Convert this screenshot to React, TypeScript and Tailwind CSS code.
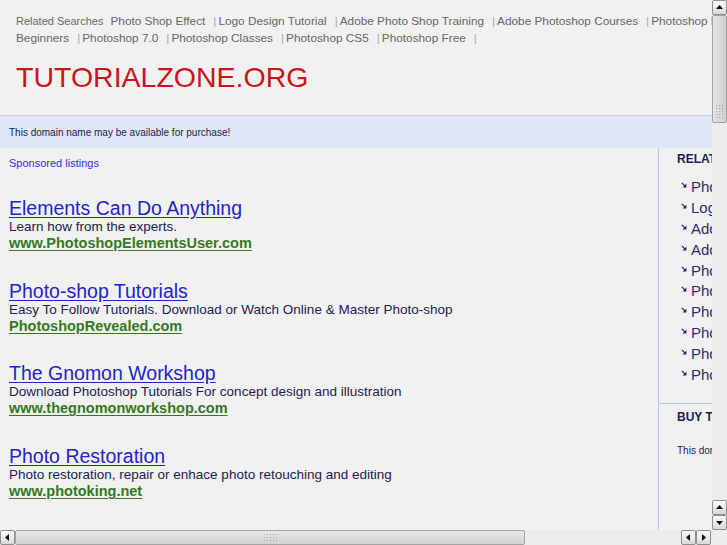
import React from 'react';

const topLinks = [
  'Photo Shop Effect',
  'Logo Design Tutorial',
  'Adobe Photo Shop Training',
  'Adobe Photoshop Courses',
  'Photoshop For',
];

const topLinks2 = ['Beginners', 'Photoshop 7.0', 'Photoshop Classes', 'Photoshop CS5', 'Photoshop Free'];

const sideLinks = [
  'Photo Shop Effect',
  'Logo Design Tutorial',
  'Adobe Photo Shop Training',
  'Adobe Photoshop Courses',
  'Photoshop For Beginners',
  'Photoshop 7.0',
  'Photoshop Classes',
  'Photoshop CS5',
  'Photoshop Free',
  'Photoshop Tutorials',
];

const ads = [
  {
    title: 'Elements Can Do Anything',
    desc: 'Learn how from the experts.',
    url: 'www.PhotoshopElementsUser.com',
  },
  {
    title: 'Photo-shop Tutorials',
    desc: 'Easy To Follow Tutorials. Download or Watch Online & Master Photo-shop',
    url: 'PhotoshopRevealed.com',
  },
  {
    title: 'The Gnomon Workshop',
    desc: 'Download Photoshop Tutorials For concept design and illustration',
    url: 'www.thegnomonworkshop.com',
  },
  {
    title: 'Photo Restoration',
    desc: 'Photo restoration, repair or enhace photo retouching and editing',
    url: 'www.photoking.net',
  },
];

function Arrow({ dir }: { dir: 'up' | 'down' | 'left' | 'right' }) {
  const pts = {
    up: '1,6 4.5,2 8,6',
    down: '1,3 4.5,7 8,3',
    left: '6,1 2,4.5 6,8',
    right: '3,1 7,4.5 3,8',
  }[dir];
  return (
    <svg width="9" height="9" viewBox="0 0 9 9">
      <polygon points={pts} fill="#111" />
    </svg>
  );
}

function SBtn({ dir }: { dir: 'up' | 'down' | 'left' | 'right' }) {
  return (
    <div className="w-[15px] h-[15px] shrink-0 flex items-center justify-center border border-[#8f8f8f] rounded-[2px] bg-gradient-to-b from-[#fbfbfb] to-[#d9d9d9]">
      <Arrow dir={dir} />
    </div>
  );
}

function Grip({ vertical }: { vertical?: boolean }) {
  return (
    <div className={vertical ? 'grid grid-cols-3 gap-[2px]' : 'grid grid-cols-5 gap-[2px]'}>
      {Array.from({ length: 15 }).map((_, i) => (
        <div key={i} className="w-[1px] h-[1px] bg-[#a8a8a8]" />
      ))}
    </div>
  );
}

function SideArrow() {
  return (
    <svg width="6" height="6" viewBox="0 0 6 6" className="shrink-0 mt-[5px]">
      <path d="M0.8 0.8 L4.6 4.6" stroke="#22276a" strokeWidth="1.2" />
      <path d="M5.4 1.6 L5.4 5.4 L1.6 5.4 Z" fill="#22276a" />
    </svg>
  );
}

export default function App() {
  return (
    <div
      className="w-[727px] h-[545px] flex flex-col bg-[#f1f1f1] overflow-hidden"
      style={{ fontFamily: '"Liberation Sans", Arial, sans-serif' }}
    >
      <div className="flex flex-1 min-h-0">
        {/* page */}
        <div className="flex-1 min-w-0 overflow-hidden">
          <div className="w-[900px]">
            {/* header */}
            <div className="px-4 pt-[13px] pb-[22px]">
              <div className="whitespace-nowrap leading-[17px] text-[11.8px] text-[#666]">
                <span className="text-[11px] text-[#6a6a6a] mr-[7px]">Related Searches</span>
                {topLinks.map((l, i) => (
                  <span key={l}>
                    {i > 0 && <span className="text-[#aaa] ml-[8px] mr-[2px]">|</span>}
                    <span>{l}</span>
                  </span>
                ))}
              </div>
              <div className="whitespace-nowrap leading-[17px] text-[11.8px] text-[#666]">
                {topLinks2.map((l) => (
                  <span key={l}>
                    <span>{l}</span>
                    <span className="text-[#aaa] ml-[8px] mr-[2px]">|</span>
                  </span>
                ))}
              </div>
              <div className="mt-[14px] text-[28.5px] leading-[32px] text-[#c8161b]">TUTORIALZONE.ORG</div>
            </div>

            {/* banner */}
            <div className="border-t border-[#c3d1ea] bg-[#dfe7f6] h-[33px] flex items-center pl-[9px] text-[10px] text-[#1b1d4e]">
              This domain name may be available for purchase!
            </div>

            {/* body */}
            <div className="flex">
              <div className="w-[659px] shrink-0 border-r border-[#b6c8e8] h-[400px] pl-[9px]">
                <div className="pt-[8px] text-[11px] leading-[14px] text-[#3030e0]">Sponsored listings</div>
                <div className="mt-[28px] flex flex-col gap-[28.7px]">
                  {ads.map((a) => (
                    <div key={a.title} className="flex flex-col">
                      <span className="text-[19.5px] leading-[20px] text-[#2323cc] underline underline-offset-[2px]">
                        {a.title}
                      </span>
                      <span className="text-[13.5px] leading-[17px] text-[#222250]">{a.desc}</span>
                      <span className="text-[14.5px] leading-[17px] font-bold text-[#337a1e] underline underline-offset-[2px]">
                        {a.url}
                      </span>
                    </div>
                  ))}
                </div>
              </div>

              <div className="w-[220px] shrink-0">
                <div className="pl-[18px] pt-[4px] pb-[17px]">
                  <div className="text-[12px] leading-[14px] font-bold text-[#1c1f55]">RELATED SEARCHES</div>
                  <div className="mt-[11px] flex flex-col pl-[4px]">
                    {sideLinks.map((l) => (
                      <div key={l} className="flex gap-[4px] h-[20.9px] text-[15px] leading-[20.9px] text-[#2a2e6e]">
                        <SideArrow />
                        <span>{l}</span>
                      </div>
                    ))}
                  </div>
                </div>
                <div className="border-t border-[#b6c8e8] pl-[18px] pt-[6px]">
                  <div className="text-[12px] leading-[14px] font-bold text-[#1c1f55]">BUY THIS DOMAIN</div>
                  <div className="mt-[20px] text-[10px] leading-[14px] text-[#1b1d4e]">
                    This domain may be for sale.
                  </div>
                </div>
              </div>
            </div>
          </div>
        </div>

        {/* vertical scrollbar */}
        <div className="w-[15px] shrink-0 flex flex-col bg-[#ececec]">
          <SBtn dir="up" />
          <div className="h-[108px] border border-[#a4a4a4] rounded-[2px] bg-gradient-to-r from-[#e4e4e4] to-[#cfcfcf] flex flex-col items-center justify-end pb-[4px]">
            <Grip vertical />
          </div>
          <div className="flex-1" />
          <SBtn dir="up" />
          <SBtn dir="down" />
        </div>
      </div>

      {/* horizontal scrollbar */}
      <div className="h-[15px] shrink-0 flex bg-[#ececec]">
        <SBtn dir="left" />
        <div className="w-[510px] border border-[#a4a4a4] rounded-[2px] bg-gradient-to-b from-[#e8e8e8] to-[#d2d2d2] flex items-center justify-center">
          <Grip />
        </div>
        <div className="flex-1" />
        <SBtn dir="left" />
        <SBtn dir="right" />
        <div className="w-[16px] shrink-0" />
      </div>
    </div>
  );
}
